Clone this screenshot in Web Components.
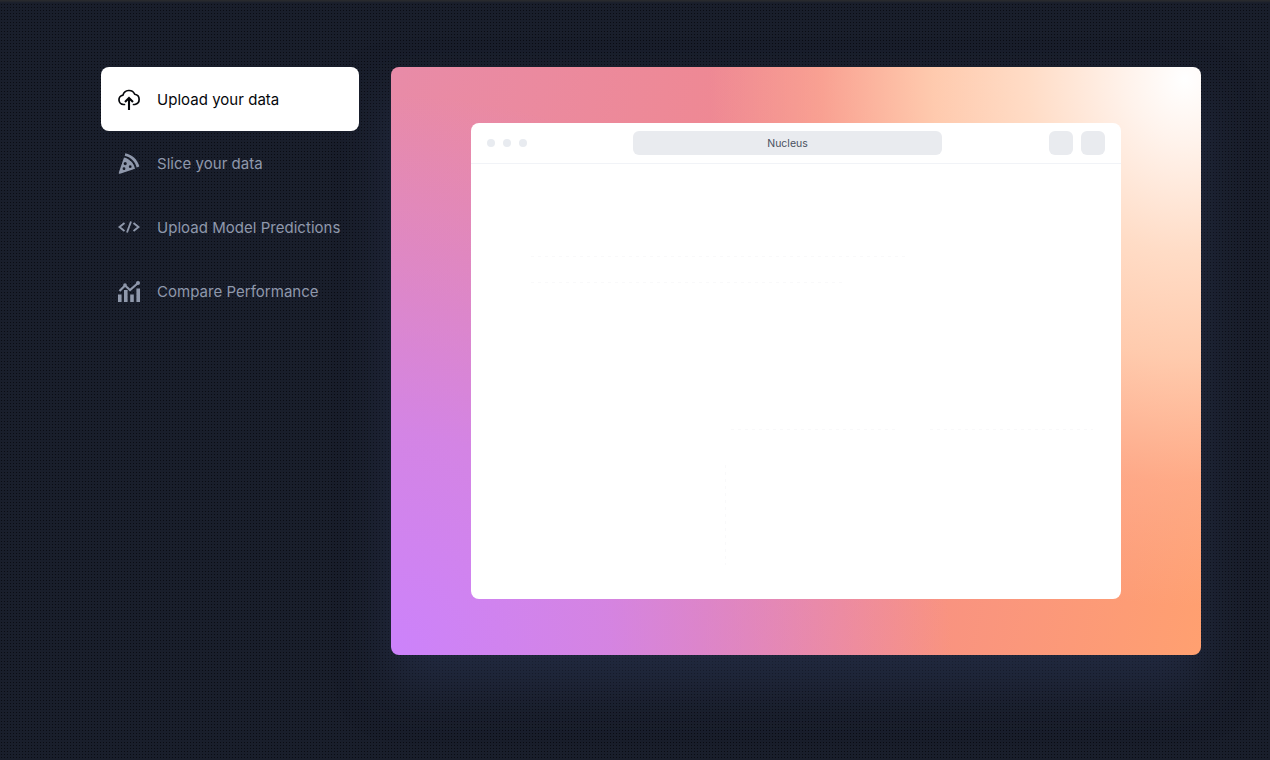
<!DOCTYPE html>
<html>
<head>
<meta charset="utf-8">
<style>
  html, body { height: 100%; }
  body {
    margin: 0;
    overflow: hidden;
    background-color: #191e2b;
    font-family: "Inter", "Noto Sans", sans-serif;
  }
</style>
</head>
<body>
<demo-page>
  <side-nav slot="nav">
    <nav-item active label="Upload your data" icon="upload"></nav-item>
    <nav-item label="Slice your data" icon="pizza"></nav-item>
    <nav-item label="Upload Model Predictions" icon="code"></nav-item>
    <nav-item label="Compare Performance" icon="chart"></nav-item>
  </side-nav>
  <gradient-stage slot="stage">
    <browser-window title="Nucleus"></browser-window>
  </gradient-stage>
</demo-page>

<script>
const ICONS = {
  upload: '<path d="M7.500 17.500H6.500a4.700 4.700 0 0 1-.5-9.350 6.200 6.200 0 0 1 11.700-.9 5.200 5.200 0 0 1 .2 10.250h-1.400" fill="none" stroke="currentColor" stroke-width="1.700" stroke-linecap="round" stroke-linejoin="round"/><path d="M12 23V11M8 15l4-4 4 4" fill="none" stroke="currentColor" stroke-width="2.100"/>',
  pizza: '<path fill-rule="evenodd" d="M7 6.500 1.800 21.500c-.3.800.4 1.500 1.200 1.200L18 17.800C17 12.200 12.500 7.700 7 6.500ZM8.200 11a1.600 1.600 0 1 1 0 3.200 1.600 1.600 0 0 1 0-3.200Zm5 3.300a1.400 1.400 0 1 1 0 2.800 1.400 1.400 0 0 1 0-2.800ZM7 16.300a1.400 1.400 0 1 1 0 2.800 1.400 1.400 0 0 1 0-2.800Z" fill="currentColor"/><path d="M8.300 2.200 7.700 4.800c6 1.300 10.500 5.800 11.900 11.700l2.800-1C20.500 8.500 15.300 3.500 8.300 2.200Z" fill="currentColor"/>',
  code: '<path d="M7.500 8 2.500 12l5 4M16.500 8l5 4-5 4M14 6.500 10 17.500" fill="none" stroke="currentColor" stroke-width="1.900"/>',
  chart: '<path d="M2.500 12 8 6.500l5 4.500L20.500 4.500" fill="none" stroke="currentColor" stroke-width="2.200"/><circle cx="8" cy="6" r="1.800" fill="currentColor"/><circle cx="21" cy="4" r="2" fill="currentColor"/><path d="M1 15.500h3.600V23H1zM7 11h3.600v12H7zM13.200 15.500h3.600V23h-3.600zM19.400 9.500H23V23h-3.600z" fill="currentColor"/>'
};

class DemoPage extends HTMLElement {
  constructor() {
    super();
    this.attachShadow({ mode: 'open' }).innerHTML = `<style>
      :host {
        display: flex;
        align-items: flex-start;
        gap: 32px;
        box-sizing: border-box;
        width: 1270px;
        height: 760px;
        padding: 67px 69px 0 101px;
        background-color: #191e2b;
        background-image:
          linear-gradient(#2b2c2e, #191e2b 3px),
          radial-gradient(circle at 1.5px 1.5px, rgba(6,8,13,.8) .8px, transparent 1px);
        background-size: 100% 4px, 3px 3px;
        background-repeat: no-repeat, repeat;
      }
    </style><slot name="nav"></slot><slot name="stage"></slot>`;
  }
}

class SideNav extends HTMLElement {
  constructor() {
    super();
    this.attachShadow({ mode: 'open' }).innerHTML = `<style>
      :host { display: flex; flex-direction: column; width: 258px; flex: none; z-index: 1; }
    </style><slot></slot>`;
  }
}

class NavItem extends HTMLElement {
  connectedCallback() {
    const icon = ICONS[this.getAttribute('icon')];
    this.attachShadow({ mode: 'open' }).innerHTML = `<style>
      :host {
        display: flex;
        align-items: center;
        gap: 16px;
        height: 64px;
        padding-left: 16px;
        border-radius: 8px;
        color: #8f98ab;
        font-size: 15px;
        letter-spacing: .03px;
      }
      :host([active]) { background: #fff; color: #05070b; }
      svg { width: 24px; height: 24px; flex: none; }
    </style><svg viewBox="0 0 24 24">${icon}</svg><span>${this.getAttribute('label')}</span>`;
  }
}

class GradientStage extends HTMLElement {
  constructor() {
    super();
    this.attachShadow({ mode: 'open' }).innerHTML = `<style>
      :host {
        display: flex;
        justify-content: center;
        box-sizing: border-box;
        width: 810px;
        height: 588px;
        padding-top: 56px;
        border-radius: 8px;
        background:
          radial-gradient(ellipse 560px 620px at 98% 2%, #fff 0, #fff3ec 10%, #ffdcc6 28%, rgba(255,205,176,.95) 45%, rgba(255,180,150,.55) 65%, rgba(255,170,140,0) 85%),
          radial-gradient(circle at 0% 100%, #cc82fb 0, rgba(204,130,251,.75) 22%, rgba(204,130,251,0) 56%),
          linear-gradient(100deg, #e88ba8 0%, #f0888f 45%, #f78f85 62%, #ffa070 100%);
        box-shadow: 0 30px 50px rgba(40,50,78,.6);
      }
    </style><slot></slot>`;
  }
}

class BrowserWindow extends HTMLElement {
  connectedCallback() {
    this.attachShadow({ mode: 'open' }).innerHTML = `<style>
      :host {
        display: block;
        width: 650px;
        height: 476px;
        border-radius: 8px;
        background: #fff;
        overflow: hidden;
      }
      .bar {
        display: grid;
        grid-template-columns: 146px 309px 1fr;
        align-items: center;
        height: 40px;
        padding: 0 16px;
        border-bottom: 1px solid #f1f3f7;
      }
      .dots { display: flex; gap: 8px; }
      .dots i { width: 8px; height: 8px; border-radius: 50%; background: #e8ebf0; }
      .url {
        height: 24px;
        line-height: 25px;
        border-radius: 6px;
        background: #e9ebef;
        color: #4a5160;
        font-size: 10.500px;
        text-align: center;
      }
      .btns { display: flex; justify-content: flex-end; gap: 8px; }
      .btns i { width: 24px; height: 24px; border-radius: 6px; background: #e9ebef; }
      svg { display: block; width: 650px; height: 435px; }
      svg path { fill: none; stroke: #f9f9fa; stroke-dasharray: 3 4; }
    </style>
    <div class="bar">
      <div class="dots"><i></i><i></i><i></i></div>
      <div class="url">${this.getAttribute('title')}</div>
      <div class="btns"><i></i><i></i></div>
    </div>
    <svg viewBox="0 0 650 435"><path d="M60 92.500H436M60 118.500H371M260 265.500H426M459 265.500H622M254.500 301V401"/></svg>`;
  }
}

customElements.define('demo-page', DemoPage);
customElements.define('side-nav', SideNav);
customElements.define('nav-item', NavItem);
customElements.define('gradient-stage', GradientStage);
customElements.define('browser-window', BrowserWindow);
</script>
</body>
</html>
